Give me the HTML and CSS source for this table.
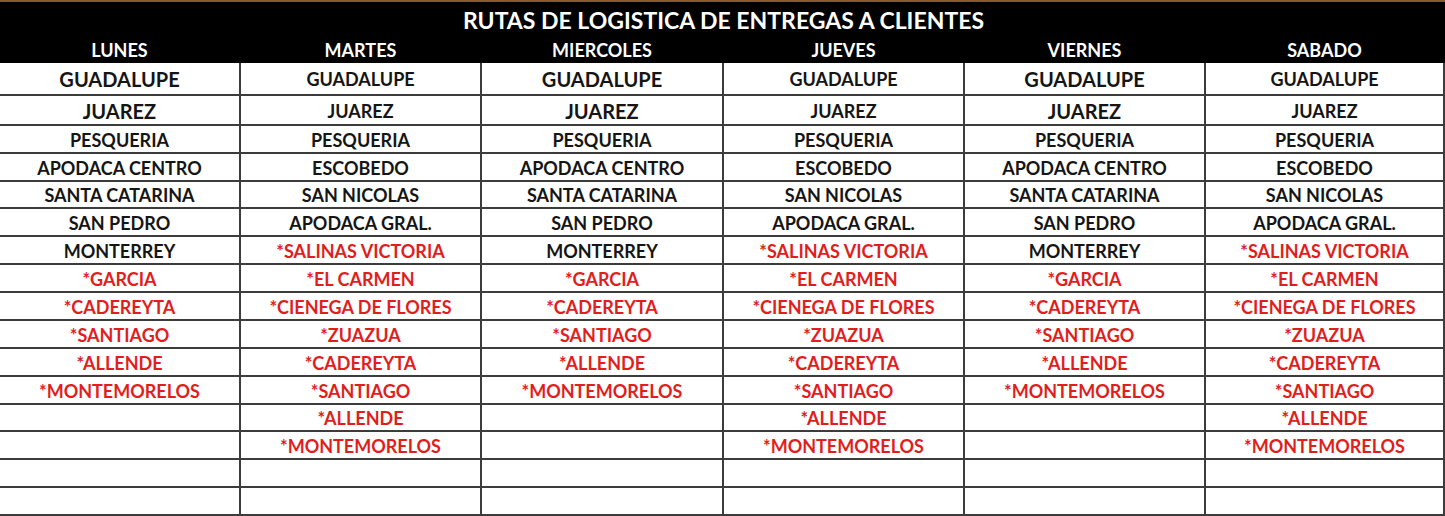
FILE: index.html
```html
<!DOCTYPE html>
<html lang="es">
<head>
<meta charset="utf-8">
<title>Rutas de logística</title>
<link rel="stylesheet" href="styles.css">
</head>
<body>
<div class="sheet">
  <div class="head">
    <div class="title">RUTAS DE LOGISTICA DE ENTREGAS A CLIENTES</div>
    <div class="days">
      <div class="day">LUNES</div><div class="day">MARTES</div><div class="day">MIERCOLES</div><div class="day">JUEVES</div><div class="day">VIERNES</div><div class="day">SABADO</div>
    </div>
  </div>
  <div class="grid">
    <div class="c big">GUADALUPE</div><div class="c">GUADALUPE</div><div class="c big">GUADALUPE</div><div class="c">GUADALUPE</div><div class="c big">GUADALUPE</div><div class="c">GUADALUPE</div>
    <div class="c big">JUAREZ</div><div class="c">JUAREZ</div><div class="c big">JUAREZ</div><div class="c">JUAREZ</div><div class="c big">JUAREZ</div><div class="c">JUAREZ</div>
    <div class="c">PESQUERIA</div><div class="c">PESQUERIA</div><div class="c">PESQUERIA</div><div class="c">PESQUERIA</div><div class="c">PESQUERIA</div><div class="c">PESQUERIA</div>
    <div class="c">APODACA CENTRO</div><div class="c">ESCOBEDO</div><div class="c">APODACA CENTRO</div><div class="c">ESCOBEDO</div><div class="c">APODACA CENTRO</div><div class="c">ESCOBEDO</div>
    <div class="c">SANTA CATARINA</div><div class="c">SAN NICOLAS</div><div class="c">SANTA CATARINA</div><div class="c">SAN NICOLAS</div><div class="c">SANTA CATARINA</div><div class="c">SAN NICOLAS</div>
    <div class="c">SAN PEDRO</div><div class="c">APODACA GRAL.</div><div class="c">SAN PEDRO</div><div class="c">APODACA GRAL.</div><div class="c">SAN PEDRO</div><div class="c">APODACA GRAL.</div>
    <div class="c">MONTERREY</div><div class="c red">*SALINAS VICTORIA</div><div class="c">MONTERREY</div><div class="c red">*SALINAS VICTORIA</div><div class="c">MONTERREY</div><div class="c red">*SALINAS VICTORIA</div>
    <div class="c red">*GARCIA</div><div class="c red">*EL CARMEN</div><div class="c red">*GARCIA</div><div class="c red">*EL CARMEN</div><div class="c red">*GARCIA</div><div class="c red">*EL CARMEN</div>
    <div class="c red">*CADEREYTA</div><div class="c red">*CIENEGA DE FLORES</div><div class="c red">*CADEREYTA</div><div class="c red">*CIENEGA DE FLORES</div><div class="c red">*CADEREYTA</div><div class="c red">*CIENEGA DE FLORES</div>
    <div class="c red">*SANTIAGO</div><div class="c red">*ZUAZUA</div><div class="c red">*SANTIAGO</div><div class="c red">*ZUAZUA</div><div class="c red">*SANTIAGO</div><div class="c red">*ZUAZUA</div>
    <div class="c red">*ALLENDE</div><div class="c red">*CADEREYTA</div><div class="c red">*ALLENDE</div><div class="c red">*CADEREYTA</div><div class="c red">*ALLENDE</div><div class="c red">*CADEREYTA</div>
    <div class="c red">*MONTEMORELOS</div><div class="c red">*SANTIAGO</div><div class="c red">*MONTEMORELOS</div><div class="c red">*SANTIAGO</div><div class="c red">*MONTEMORELOS</div><div class="c red">*SANTIAGO</div>
    <div class="c"></div><div class="c red">*ALLENDE</div><div class="c"></div><div class="c red">*ALLENDE</div><div class="c"></div><div class="c red">*ALLENDE</div>
    <div class="c"></div><div class="c red">*MONTEMORELOS</div><div class="c"></div><div class="c red">*MONTEMORELOS</div><div class="c"></div><div class="c red">*MONTEMORELOS</div>
    <div class="c"></div><div class="c"></div><div class="c"></div><div class="c"></div><div class="c"></div><div class="c"></div>
    <div class="c"></div><div class="c"></div><div class="c"></div><div class="c"></div><div class="c"></div><div class="c"></div>
  </div>
</div>
</body>
</html>
```

FILE: styles.css
```css
html, body {
  margin: 0;
  padding: 0;
  background: #ffffff;
}
.sheet {
  width: 1445px;
  font-family: Lato, "Liberation Sans", sans-serif;
}
.head {
  background: #000000;
  border-top: 2px solid #8a5a28;
  height: 61px;
  color: #ffffff;
  display: flex;
  flex-direction: column;
}
.title {
  text-align: center;
  font-size: 23px;
  font-weight: 700;
  height: 36px;
  line-height: 36px;
  padding-left: 2px;
}
.days {
  display: grid;
  grid-template-columns: 241px 241px 242px 241px 241px 239px;
  height: 25px;
}
.day {
  text-align: center;
  font-size: 18px;
  font-weight: 700;
  line-height: 25px;
  padding-right: 2px;
}
.grid {
  display: grid;
  grid-template-columns: 241px 241px 242px 241px 241px 239px;
  grid-template-rows: 33px 30px 28px 28px 27px 28px 28px 28px 28px 28px 28px 28px 27px 28px 28px 28px;
}
.c {
  box-sizing: border-box;
  border-right: 2px solid #3c3c3c;
  border-bottom: 2px solid #3c3c3c;
  display: flex;
  align-items: center;
  justify-content: center;
  padding-top: 1px;
  font-size: 18px;
  font-weight: 700;
  color: #151515;
  white-space: nowrap;
}
.c.big {
  font-size: 20px;
}
.c.red {
  color: #e01e1e;
}
```
